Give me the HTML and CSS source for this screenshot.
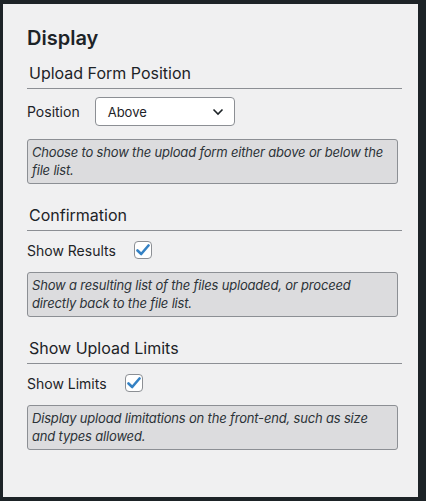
FILE: index.html
```html
<!DOCTYPE html>
<html>
<head>
<meta charset="utf-8">
<link rel="stylesheet" href="styles.css">
</head>
<body>
<div class="panel">
  <h2 class="title">Display</h2>

  <section class="group">
    <h3 class="group-head">Upload Form Position</h3>
    <div class="row select-row">
      <span class="label">Position</span>
      <div class="select">
        <span>Above</span>
        <svg class="chev" width="12" height="8" viewBox="0 0 12 8"><path d="M1.5 1.5 L6 6 L10.5 1.5" fill="none" stroke="#1d2327" stroke-width="1.6"/></svg>
      </div>
    </div>
    <p class="desc">Choose to show the upload form either above or below the file list.</p>
  </section>

  <section class="group">
    <h3 class="group-head">Confirmation</h3>
    <div class="row check-row">
      <span class="label">Show Results</span>
      <span class="check"><svg width="14" height="12" viewBox="0 0 14 12"><path d="M1.5 6.5 L5.2 10 L12.5 1.5" fill="none" stroke="#3582c4" stroke-width="2.6" stroke-linecap="round" stroke-linejoin="round"/></svg></span>
    </div>
    <p class="desc">Show a resulting list of the files uploaded, or proceed directly back to the file list.</p>
  </section>

  <section class="group">
    <h3 class="group-head">Show Upload Limits</h3>
    <div class="row check-row">
      <span class="label">Show Limits</span>
      <span class="check"><svg width="14" height="12" viewBox="0 0 14 12"><path d="M1.5 6.5 L5.2 10 L12.5 1.5" fill="none" stroke="#3582c4" stroke-width="2.6" stroke-linecap="round" stroke-linejoin="round"/></svg></span>
    </div>
    <p class="desc">Display upload limitations on the front-end, such as size and types allowed.</p>
  </section>
</div>
</body>
</html>
```

FILE: styles.css
```css
html, body {
  margin: 0;
  height: 100%;
}
body {
  background: #1d2327;
  padding: 4px 8px 4px 3px;
  box-sizing: border-box;
  font-family: Inter, "Liberation Sans", sans-serif;
  color: #1d2327;
}
.panel {
  background: #f0f0f1;
  height: 100%;
  box-sizing: border-box;
  padding: 21px 16px 0 24px;
}
.title {
  margin: 0;
  font-size: 20px;
  font-weight: 600;
  line-height: 26px;
}
.group {
  margin-top: 10px;
}
.group + .group {
  margin-top: 19px;
}
.group-head {
  margin: 0;
  font-size: 16px;
  font-weight: 400;
  line-height: 24px;
  color: #1d2327;
  padding: 0 0 3px 2px;
  border-bottom: 1px solid #8c8f94;
}
.row {
  display: flex;
  align-items: center;
}
.select-row {
  margin-top: 8px;
  height: 29px;
}
.check-row {
  margin-top: 10px;
  height: 18px;
}
.label {
  font-size: 14px;
  color: #1d2327;
}
.select {
  margin-left: 15px;
  height: 27px;
  border: 1px solid #8c8f94;
  border-radius: 4px;
  background: #fff;
  display: flex;
  align-items: center;
  justify-content: space-between;
  padding: 0 10px 0 12px;
  box-sizing: content-box;
  font-size: 13px;
  width: 116px;
}
.check {
  margin-left: 18px;
  width: 16px;
  height: 16px;
  border: 1px solid #8c8f94;
  border-radius: 4px;
  background: #fff;
  display: flex;
  align-items: center;
  justify-content: center;
}
.desc {
  margin: 13px 4px 0 0;
  background: #dcdcde;
  border: 1px solid #8c8f94;
  border-radius: 3px;
  padding: 3px 4px 4px 4px;
  font-size: 13px;
  letter-spacing: -0.18px;
  font-style: italic;
  line-height: 18px;
  color: #2c3338;
}
```
